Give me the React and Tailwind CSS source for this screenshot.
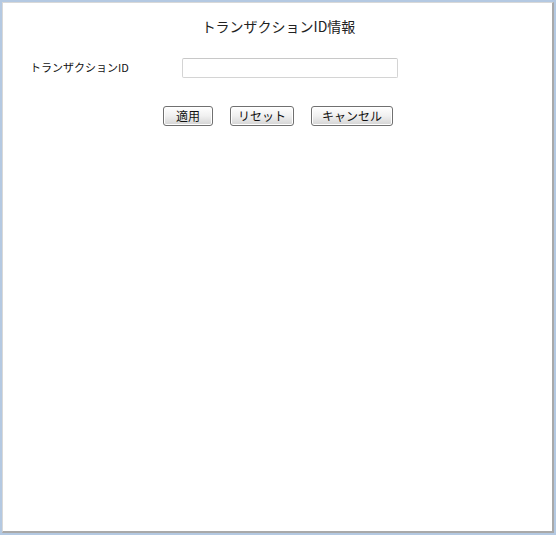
import React from "react";

const jp = { fontFamily: '"Noto Sans CJK JP", "Noto Sans", sans-serif' };

function Btn({ children, className }) {
  return (
    <button
      className={
        "h-[20px] rounded-[3px] border border-[#707070] bg-gradient-to-b from-[#ffffff] via-[#f0f0f0] to-[#d4d4d4] text-[12px] leading-none text-[#111] shadow-[inset_0_0_0_1px_#ffffff] " +
        className
      }
    >
      {children}
    </button>
  );
}

export default function App() {
  return (
    <div className="h-[535px] w-[556px] border-2 border-[#b4c9e2] bg-white" style={jp}>
      <div className="flex h-full flex-col border-l border-t border-r-2 border-b-2 border-l-[#d8d8d8] border-t-[#d8d8d8] border-r-[#a9a9a9] border-b-[#a9a9a9] bg-white">
        <h1 className="mt-[11px] pl-[2px] text-center text-[14px] font-normal leading-[24px] text-[#222]">
          トランザクションID情報
        </h1>
        <div className="mt-[20px] flex items-start">
          <label className="ml-[27px] w-[152px] pt-[1px] text-[11px] leading-[16px] text-[#111]">
            トランザクションID
          </label>
          <input
            type="text"
            className="h-[20px] w-[216px] rounded-[2px] border border-[#d4d4d4] border-t-[#c8c8c8] bg-white"
          />
        </div>
        <div className="mt-[28px] flex justify-center gap-[17px] pl-[1px]">
          <Btn className="w-[50px]">適用</Btn>
          <Btn className="w-[64px]">リセット</Btn>
          <Btn className="w-[82px]">キャンセル</Btn>
        </div>
      </div>
    </div>
  );
}
